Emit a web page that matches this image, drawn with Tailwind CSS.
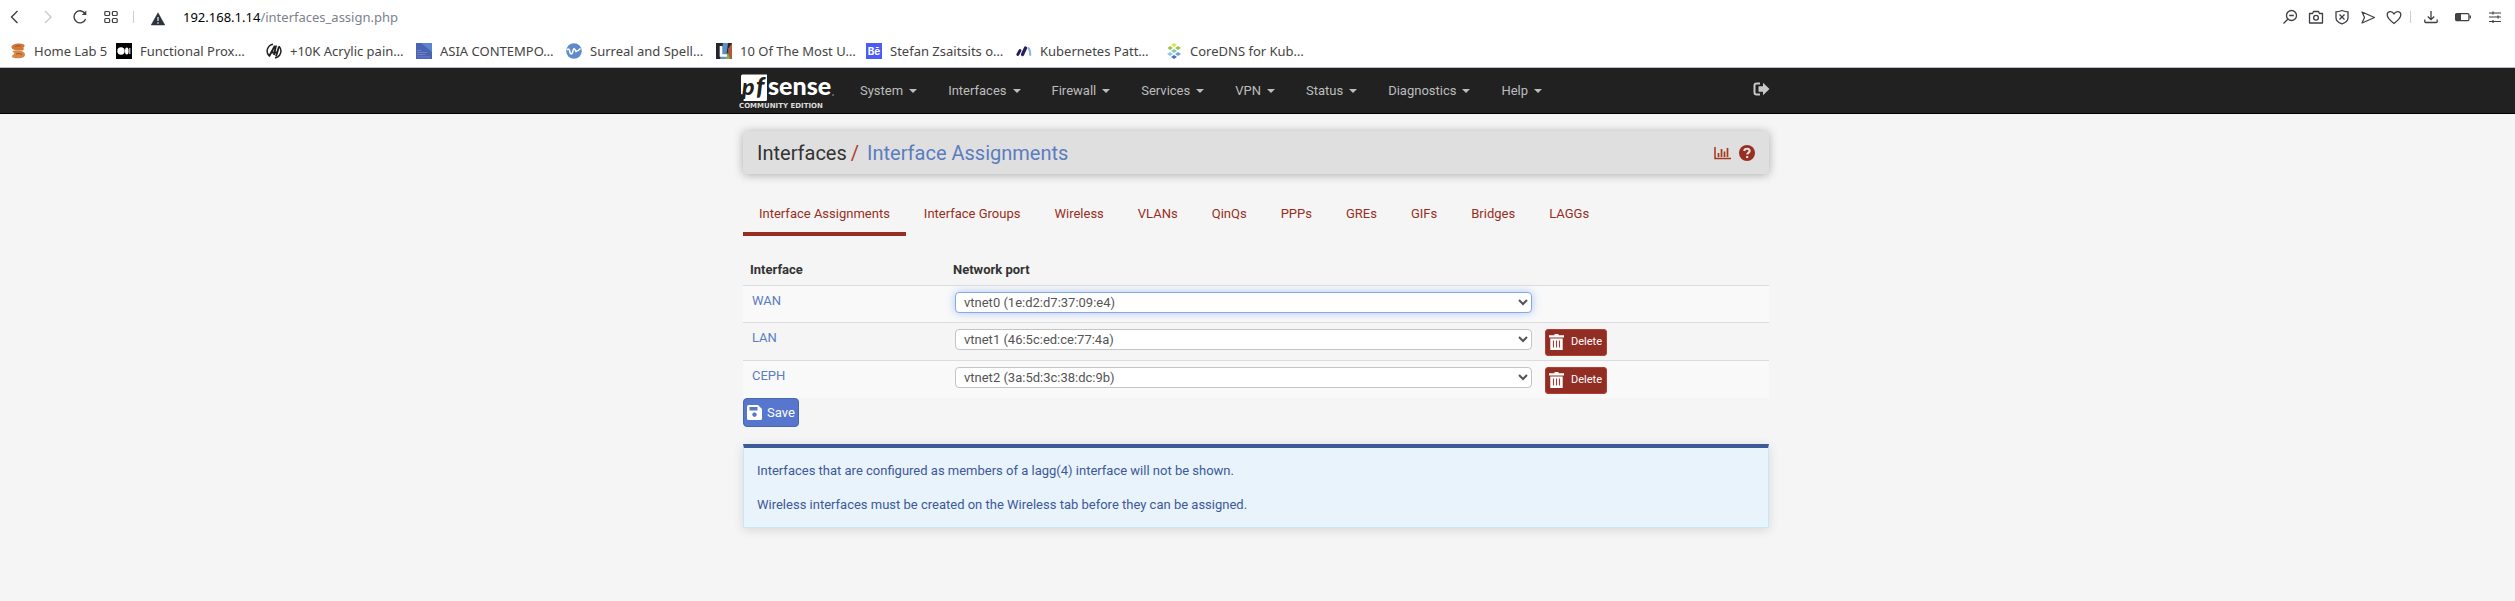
<!DOCTYPE html>
<html lang="en">
<head>
<meta charset="utf-8">
<title>Interfaces: Interface Assignments</title>
<script src="https://cdn.jsdelivr.net/npm/@tailwindcss/browser@4"></script>
</head>
<body class="min-h-screen bg-[#f5f5f5] font-['Roboto',sans-serif] text-[13px] leading-5 text-[#333]">

<!-- Browser toolbar -->
<header class="border-b border-[#b9bec6] bg-white font-['Noto_Sans',sans-serif] text-[#444]">
  <div class="flex h-[34px] items-center justify-between pr-3 pl-2">
    <div class="flex items-center">
      <button type="button" aria-label="Back" class="mr-[19px]"><svg class="block size-[14px]" viewBox="0 0 14 14" fill="none" stroke="#3c3f44" stroke-width="1.4"><path d="M9.5 1 3.5 7l6 6"/></svg></button>
      <button type="button" aria-label="Forward" class="mr-[17px]"><svg class="block size-[14px]" viewBox="0 0 14 14" fill="none" stroke="#c6c8cb" stroke-width="1.4"><path d="m4 1 6 6-6 6"/></svg></button>
      <button type="button" aria-label="Reload" class="mr-[16px]"><svg class="block size-4" viewBox="0 0 16 16" fill="none" stroke="#3c3f44" stroke-width="1.4"><path d="M13.6 10A6 6 0 1 1 13.4 5.200"/><path d="M14.300 1.500v4.500h-4.500z" fill="#3c3f44" stroke="none"/></svg></button>
      <button type="button" aria-label="Speed dial" class="mr-[15px]"><svg class="block size-[14px]" viewBox="0 0 14 14" fill="none" stroke="#3c3f44" stroke-width="1.200"><rect x=".8" y="1.500" width="4.800" height="4" rx="1"/><rect x="8.400" y="1.500" width="4.800" height="4" rx="1"/><rect x=".8" y="8.500" width="4.800" height="4" rx="1"/><rect x="8.400" y="8.500" width="4.800" height="4" rx="1"/></svg></button>
      <span class="mr-[17px] h-3 w-px bg-[#c9cbce]"></span>
      <svg class="mt-1 mr-[18px] block size-[14px]" viewBox="0 0 14 14"><path d="M7 .8 13.800 13H.2z" fill="#2c323c" stroke="#2c323c" stroke-width=".5" stroke-linejoin="round"/><path d="M7 5v4M7 10.300v1.500" stroke="#d5d8dd" stroke-width="1.400"/></svg>
      <span class="text-[13px] text-[#7b828e]"><span class="text-black">192.168.1.14</span>/interfaces_assign.php</span>
    </div>
    <div class="flex items-center gap-[10px]">
      <button type="button" aria-label="Zoom out"><svg class="block size-4" viewBox="0 0 16 16" fill="none" stroke="#3c3f44" stroke-width="1.300"><circle cx="9.500" cy="6.500" r="5"/><path d="M7.200 6.500h4.600M5.800 10.200 1.500 14.500"/></svg></button>
      <button type="button" aria-label="Snapshot"><svg class="block size-4" viewBox="0 0 16 16" fill="none" stroke="#3c3f44" stroke-width="1.300"><path d="M1.500 4.500h3l1-2h5l1 2h3v9.500h-13z" stroke-linejoin="round"/><circle cx="8" cy="8.800" r="2.400"/></svg></button>
      <button type="button" aria-label="Ad blocker"><svg class="block size-4" viewBox="0 0 16 16" fill="none" stroke="#3c3f44" stroke-width="1.300"><path d="M8 1.500c2 .8 4 1.300 6 1.300v6c0 3-2.500 5-6 6-3.500-1-6-3-6-6v-6c2 0 4-.5 6-1.300zM5.500 5.500l5 5M10.500 5.500l-5 5"/></svg></button>
      <button type="button" aria-label="Send"><svg class="block size-4" viewBox="0 0 16 16" fill="none" stroke="#3c3f44" stroke-width="1.200" stroke-linejoin="round"><path d="M2 3l12.500 5.500L2 14l2.500-5.500z"/></svg></button>
      <button type="button" aria-label="Bookmark this page"><svg class="block size-4" viewBox="0 0 16 16" fill="none" stroke="#3c3f44" stroke-width="1.300"><path d="M8 14.500C4 11.500 1.200 8.800 1.200 5.800 1.200 2 6 1.500 8 4.800 10 1.500 14.800 2 14.800 5.800c0 3-2.800 5.700-6.800 8.700z"/></svg></button>
      <span class="-ml-[2px] mr-[2px] h-3 w-px bg-[#c9cbce]"></span>
      <button type="button" aria-label="Downloads" class="mr-[6px]"><svg class="block size-4" viewBox="0 0 16 16" fill="none" stroke="#3c3f44" stroke-width="1.300"><path d="M8 2v8.500M4.800 7.500 8 10.700l3.200-3.200M1.800 10.500v2.200q0 .8.800.8h10.800q.8 0 .8-.8v-2.200"/></svg></button>
      <button type="button" aria-label="Battery saver" class="mr-[6px]"><svg class="block size-4" viewBox="0 0 16 16"><rect x=".6" y="4.600" width="13.300" height="7" rx="1" fill="none" stroke="#3c3f44" stroke-width="1.200"/><path d="M1 5h5v6.500H1zM14.500 6.500H16v3h-1.500z" fill="#444"/></svg></button>
      <button type="button" aria-label="Easy setup"><svg class="block size-4" viewBox="0 0 16 16" fill="none" stroke="#3c3f44" stroke-width="1.200"><path d="M2 4h12M2 8h12M2 12.500h12M6 2.500v3M11 6.500v3M6 11v3"/></svg></button>
    </div>
  </div>
  <nav aria-label="Bookmarks" class="flex h-[33px] items-center pl-[10px] text-[13px]">
    <a href="#" class="flex w-[106px] shrink-0 items-center gap-2 whitespace-nowrap"><svg class="size-4 shrink-0" viewBox="0 0 16 16"><path d="M14 1.500C9-.5 1 1 1.500 4.500c.3 2.500 5 3 9.500 3 3 0 4-2 2-2.500 1.500-.5 2-2.500 1-3.500z" fill="#cf7a3c"/><path d="M2 8c3-1 13-1 13 3.500S6 16 1.500 14c1-.5 1.500-1 .5-2 3-.5 3-2 0-4z" fill="#d58545"/><path d="M5 3.500q3-1.500 6-.5M6 11q3-1 6 .3" stroke="#a85424" fill="none"/></svg>Home Lab 5</a>
    <a href="#" class="flex w-[150px] shrink-0 items-center gap-2 whitespace-nowrap"><svg class="size-4 shrink-0" viewBox="0 0 16 16"><path d="M0 0h16v16H0z"/><circle cx="5" cy="8" r="3.700" fill="#fff"/><ellipse cx="10.800" cy="8" rx="1.800" ry="3.500" fill="#fff"/><path d="M13.300 5h1v6h-1z" fill="#fff"/></svg>Functional Prox…</a>
    <a href="#" class="flex w-[150px] shrink-0 items-center gap-2 whitespace-nowrap"><svg class="size-4 shrink-0" viewBox="0 0 16 16"><path d="M3 12.800A7 7 0 0 1 7 1.200M13 3.200A7 7 0 0 1 9 14.900" fill="none" stroke="#222" stroke-width="1.500"/><path d="M3 13.500 8.500 3.500h1.300L8 12M5.500 9.500h6M13 3.500 10 13.500" stroke="#222" stroke-width="1.900" fill="none"/></svg>+10K Acrylic pain…</a>
    <a href="#" class="flex w-[150px] shrink-0 items-center gap-2 whitespace-nowrap"><svg class="size-4 shrink-0" viewBox="0 0 16 16"><path d="M0 0h16v16H0z" fill="#4a64b4"/><path d="M5 0h11v9z" fill="#5c86cc"/><path d="M1 7.500h4M1 9.500h10M1 11.500h8M1 14h13" stroke="#8f8fd0" stroke-width=".6"/></svg>ASIA CONTEMPO…</a>
    <a href="#" class="flex w-[150px] shrink-0 items-center gap-2 whitespace-nowrap"><svg class="size-4 shrink-0" viewBox="0 0 16 16"><circle cx="8" cy="8" r="7.800" fill="#5f8bc9"/><path d="M1 7q2-2 2.500.5t1 3q1.500 1.500 2.300-2T8.500 6t1.500 2.500Q12 8 14.500 5.500" stroke="#fff" stroke-width="1.500" fill="none"/></svg>Surreal and Spell…</a>
    <a href="#" class="flex w-[150px] shrink-0 items-center gap-2 whitespace-nowrap"><svg class="size-4 shrink-0" viewBox="0 0 16 16"><path d="M0 0h16v16H0z" fill="#25262b"/><path d="M7 0h5l-2 16H4z" fill="#5c8fc4"/><path d="M12 6l4-6v16h-3z" fill="#b5573c"/><path d="M9 16l3-7 2 7z" fill="#7fae54"/><path d="M5 3v9.500h6" stroke="#fff" stroke-width="2.600" fill="none"/></svg>10 Of The Most U…</a>
    <a href="#" class="flex w-[150px] shrink-0 items-center gap-2 whitespace-nowrap"><span class="flex size-4 shrink-0 items-center justify-center bg-[#4a5cf5] font-['Inter',sans-serif] text-[10px] font-bold text-white">Bē</span>Stefan Zsaitsits o…</a>
    <a href="#" class="flex w-[150px] shrink-0 items-center gap-2 whitespace-nowrap"><svg class="size-4 shrink-0" viewBox="0 0 16 16" fill="none" stroke-linecap="round"><path d="M1.800 11.500 4 7.500" stroke="#251f55" stroke-width="2.800"/><path d="M6.500 11.500 9.500 5" stroke="#251f55" stroke-width="3.200"/><path d="M12.300 5q2 2 2 7" stroke="#8fb2e8" stroke-width="2"/></svg>Kubernetes Patt…</a>
    <a href="#" class="flex w-[150px] shrink-0 items-center gap-2 whitespace-nowrap"><svg class="size-4 shrink-0" viewBox="0 0 16 16"><path d="M8 0l3 2-3 2-3-2z" fill="#e3e34a"/><path d="M4 3l3 2-3 2-2.500-2zM12 3l3 2-3 2-3-2z" fill="#9cc443"/><path d="M8 6l3 2-3 2-3-2z" fill="#7fc9b5"/><path d="M4 9l3 2-3 2-3-2z" fill="#8cc8ee"/><path d="M12 9l3 2-3 2-3-2z" fill="#6a9ee0"/><path d="M8 12l3 2-3 2-3-2z" fill="#4a6fc9"/></svg>CoreDNS for Kub…</a>
  </nav>
</header>

<!-- Main navigation -->
<nav aria-label="Main" class="border-b border-black bg-[#212121] text-[#bdbdbd]">
  <div class="mx-auto flex h-[45px] max-w-[1037px] items-center pr-[6px]">
    <a href="#" aria-label="pfSense Community Edition" class="mr-[25px] block shrink-0">
      <svg class="block h-[40px] w-[96px]" viewBox="0 0 96 40">
        <path d="M2 5q0-1.500 1.500-1.500H28v25q0 1.500-1.500 1.500H4.500L5.500 24 2 23z" fill="#fff"/>
        <text x="3" y="24" font-family="Lato" font-weight="900" font-style="italic" font-size="23" fill="#212121">p</text>
        <text x="17" y="24" font-family="Lato" font-weight="900" font-style="italic" font-size="25" fill="#212121">f</text>
        <text x="29" y="24" font-family="Lato" font-weight="900" font-size="25" fill="#fff">sense</text>
        <circle cx="94" cy="24" r=".8" fill="#aaa"/>
        <text x="0" y="37" font-family="DejaVu Sans" font-weight="700" font-size="7" fill="#dcdcdc">COMMUNITY EDITION</text>
      </svg>
    </a>
    <div class="flex grow items-center gap-[31px]">
      <a href="#" class="flex items-center gap-[6px]">System<i class="border-x-4 border-t-4 border-x-transparent"></i></a>
      <a href="#" class="flex items-center gap-[6px]">Interfaces<i class="border-x-4 border-t-4 border-x-transparent"></i></a>
      <a href="#" class="flex items-center gap-[6px]">Firewall<i class="border-x-4 border-t-4 border-x-transparent"></i></a>
      <a href="#" class="flex items-center gap-[6px]">Services<i class="border-x-4 border-t-4 border-x-transparent"></i></a>
      <a href="#" class="flex items-center gap-[6px]">VPN<i class="border-x-4 border-t-4 border-x-transparent"></i></a>
      <a href="#" class="flex items-center gap-[6px]">Status<i class="border-x-4 border-t-4 border-x-transparent"></i></a>
      <a href="#" class="flex items-center gap-[6px]">Diagnostics<i class="border-x-4 border-t-4 border-x-transparent"></i></a>
      <a href="#" class="flex items-center gap-[6px]">Help<i class="border-x-4 border-t-4 border-x-transparent"></i></a>
    </div>
    <a href="#" aria-label="Log out" class="-mt-1"><svg class="block h-[14px] w-[17px]" viewBox="0 0 17 14"><path d="M7 1.500H3.500q-2 0-2 2v7q0 2 2 2H7" fill="none" stroke="#c8c8c8" stroke-width="2"/><path d="M16.500 7 10 .8v3.400H5.500v5.600H10v3.400z" fill="#c8c8c8"/></svg></a>
  </div>
</nav>

<main class="mx-auto max-w-[1029px] pt-[17px] pr-[3px] pb-8">
  <header class="flex h-[43px] items-center justify-between rounded-[4px] bg-[#dfdfdf] pr-[14px] pl-[14px] shadow-[0_1px_10px_rgba(0,0,0,0.3)]">
    <h1 class="flex gap-1 text-[20px]"><span>Interfaces</span><span class="mr-1 text-[#b03a2e]">/</span><a href="#" class="text-[#5b7cbf]">Interface Assignments</a></h1>
    <div class="flex items-center gap-2">
      <a href="#" aria-label="Status graph"><svg class="block h-4 w-[17px]" viewBox="0 0 17 16" fill="none" stroke="#a5381f"><path d="M1 2v11.500h16" stroke-width="1.500"/><path d="M4.500 8v4M7.500 4v8M10.500 6.500V12M13.500 3v9" stroke-width="1.700"/></svg></a>
      <a href="#" aria-label="Help"><svg class="block size-4" viewBox="0 0 16 16"><circle cx="8" cy="8" r="8" fill="#982e22"/><path d="M5.200 6q.3-2.300 2.800-2.300T10.700 6c0 1.500-2.500 1.800-2.500 3.600M8.200 11v2" stroke="#e3e0e0" stroke-width="2.100" fill="none"/></svg></a>
    </div>
  </header>

  <nav aria-label="Interface pages" class="mt-[17px] flex gap-[2px] text-[#982e22]">
    <a href="#" aria-current="page" class="border-b-4 border-[#982e22] px-4 pt-[13px] pb-2">Interface Assignments</a>
    <a href="#" class="px-4 pt-[13px]">Interface Groups</a>
    <a href="#" class="px-4 pt-[13px]">Wireless</a>
    <a href="#" class="px-4 pt-[13px]">VLANs</a>
    <a href="#" class="px-4 pt-[13px]">QinQs</a>
    <a href="#" class="px-4 pt-[13px]">PPPs</a>
    <a href="#" class="px-4 pt-[13px]">GREs</a>
    <a href="#" class="px-4 pt-[13px]">GIFs</a>
    <a href="#" class="px-4 pt-[13px]">Bridges</a>
    <a href="#" class="px-4 pt-[13px]">LAGGs</a>
  </nav>

  <form>
    <table class="mt-[17px] w-full table-fixed border-collapse text-left">
      <colgroup><col class="w-[204px]"><col class="w-[593px]"><col></colgroup>
      <thead>
        <tr class="h-8 align-middle"><th class="px-[7px] pt-[2px] font-bold">Interface</th><th class="px-[6px] pt-[2px] font-bold">Network port</th><th></th></tr>
      </thead>
      <tbody class="align-top">
        <tr class="h-[37px] border-t border-[#dcdcdc] bg-[#f9f9f9]">
          <td class="px-[9px] pt-[5px]"><a href="#" id="wan" class="text-[#5b7cbf]">WAN</a></td>
          <td class="px-2 pt-[6px]"><select aria-labelledby="wan" class="block h-[21px] w-full rounded-[4px] border border-[#86a9e8] bg-white px-1 text-[#555] shadow-[0_0_8px_rgba(102,150,233,0.5)]"><option>vtnet0 (1e:d2:d7:37:09:e4)</option></select></td>
          <td></td>
        </tr>
        <tr class="h-[38px] border-t border-[#dcdcdc]">
          <td class="px-[9px] pt-[5px]"><a href="#" id="lan" class="text-[#5b7cbf]">LAN</a></td>
          <td class="px-2 pt-[6px]"><select aria-labelledby="lan" class="block h-[21px] w-full rounded-[4px] border border-[#c4c4c4] bg-white px-1 text-[#555]"><option>vtnet1 (46:5c:ed:ce:77:4a)</option></select></td>
          <td class="px-[5px] pt-[6px]"><button type="button" class="flex h-[27px] w-[62px] items-center rounded-[3px] border border-[#b03f35] bg-[#922d24] pl-[3px] text-[11px] text-white"><svg class="mr-[6px] size-4 shrink-0" viewBox="0 0 16 16"><path d="M5.500 0h4v1.300H15v2.200H0V1.300h5.500zM1.300 4.500h12.400V16H1.300z" fill="#fff"/><path d="M4.500 6.500v7M7.500 6.500v7M10.500 6.500v7" stroke="#a23c34" stroke-width="1.100"/></svg>Delete</button></td>
        </tr>
        <tr class="h-[38px] border-t border-[#dcdcdc] bg-[#f9f9f9]">
          <td class="px-[9px] pt-[5px]"><a href="#" id="ceph" class="text-[#5b7cbf]">CEPH</a></td>
          <td class="px-2 pt-[6px]"><select aria-labelledby="ceph" class="block h-[21px] w-full rounded-[4px] border border-[#c4c4c4] bg-white px-1 text-[#555]"><option>vtnet2 (3a:5d:3c:38:dc:9b)</option></select></td>
          <td class="px-[5px] pt-[6px]"><button type="button" class="flex h-[27px] w-[62px] items-center rounded-[3px] border border-[#b03f35] bg-[#922d24] pl-[3px] text-[11px] text-white"><svg class="mr-[6px] size-4 shrink-0" viewBox="0 0 16 16"><path d="M5.500 0h4v1.300H15v2.200H0V1.300h5.500zM1.300 4.500h12.400V16H1.300z" fill="#fff"/><path d="M4.500 6.500v7M7.500 6.500v7M10.500 6.500v7" stroke="#a23c34" stroke-width="1.100"/></svg>Delete</button></td>
        </tr>
      </tbody>
    </table>
    <button type="submit" class="flex h-[29px] w-[56px] items-center rounded-[4px] border border-[#4a66ae] bg-[#5677cd] pl-[3px] text-white"><svg class="mr-[5px] size-[15px]" viewBox="0 0 15 15"><path fill-rule="evenodd" d="M1.500 0H11l4 4v9.500q0 1.500-1.500 1.500h-12Q0 15 0 13.500v-12Q0 0 1.500 0zM2.500 2v3.500h8V2zM7.500 7.500a2.200 2.200 0 1 0 .01 0z" fill="#fff"/></svg>Save</button>
  </form>

  <div class="mt-[17px] flex flex-col gap-[14px] border border-t-4 border-[#c5e9f2] border-t-[#3d5998] bg-[#e8f3fc] px-[13px] pt-[13px] pb-[12px] text-[#3d5998] shadow-[0_2px_10px_rgba(0,0,0,0.12)]">
    <p>Interfaces that are configured as members of a lagg(4) interface will not be shown.</p>
    <p>Wireless interfaces must be created on the Wireless tab before they can be assigned.</p>
  </div>
</main>
</body>
</html>
